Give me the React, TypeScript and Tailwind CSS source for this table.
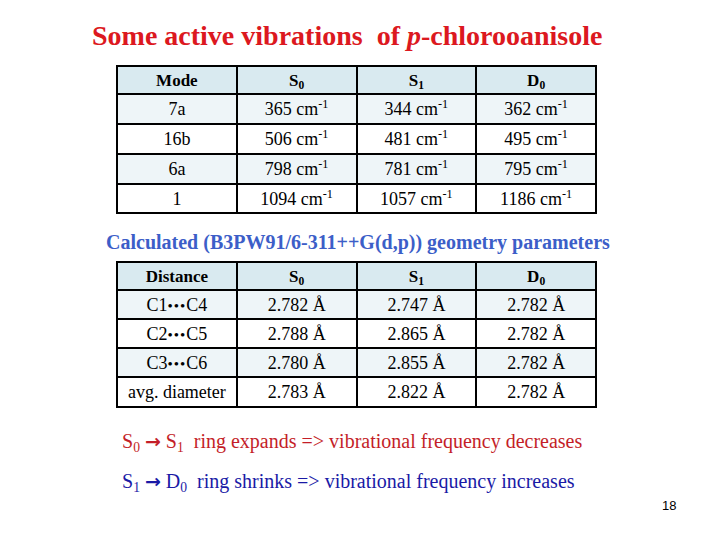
import React from "react";

const serif = { fontFamily: '"Liberation Serif", "Times New Roman", serif' };
const dejavu = { fontFamily: '"DejaVu Sans", sans-serif' };

function Sub({ c, n }: { c: string; n: string }) {
  return (
    <span>
      {c}
      <span className="text-[0.68em] relative top-[0.3em]">{n}</span>
    </span>
  );
}

function Cm({ v }: { v: string }) {
  return (
    <span>
      {v} cm<span className="text-[0.68em] relative -top-[0.55em]">-1</span>
    </span>
  );
}

const rowBg = ["bg-[#eef5f8]", "bg-white", "bg-[#eef5f8]", "bg-white"];

function Table({
  head,
  rows,
  rowH,
}: {
  head: React.ReactNode[];
  rows: React.ReactNode[][];
  rowH: string[];
}) {
  return (
    <table className="ml-[116px] w-[481px] border-collapse border-2 border-black table-fixed text-[18px] text-black">
      <tbody>
        <tr className="bg-[#d9eaf0] h-[28px]">
          {head.map((h, i) => (
            <td key={i} className="border-2 border-black text-center font-bold p-0 leading-none text-[17px]">
              {h}
            </td>
          ))}
        </tr>
        {rows.map((r, ri) => (
          <tr key={ri} className={`${rowBg[ri]} ${rowH[ri]}`}>
            {r.map((c, ci) => (
              <td key={ci} className="border-2 border-black text-center p-0 leading-none">
                {c}
              </td>
            ))}
          </tr>
        ))}
      </tbody>
    </table>
  );
}

export default function App() {
  const t1 = [
    ["7a", <Cm v="365" />, <Cm v="344" />, <Cm v="362" />],
    ["16b", <Cm v="506" />, <Cm v="481" />, <Cm v="495" />],
    ["6a", <Cm v="798" />, <Cm v="781" />, <Cm v="795" />],
    ["1", <Cm v="1094" />, <Cm v="1057" />, <Cm v="1186" />],
  ];
  const dots = <span className="text-[15px] tracking-[1px]">{"\u2022\u2022\u2022"}</span>;
  const t2: React.ReactNode[][] = [
    [<span>C1{dots}C4</span>, "2.782 Å", "2.747 Å", "2.782 Å"],
    [<span>C2{dots}C5</span>, "2.788 Å", "2.865 Å", "2.782 Å"],
    [<span>C3{dots}C6</span>, "2.780 Å", "2.855 Å", "2.782 Å"],
    ["avg. diameter", "2.783 Å", "2.822 Å", "2.782 Å"],
  ];
  const arrow = (
    <span className="font-bold text-[19px]" style={dejavu}>
      →
    </span>
  );
  return (
    <div className="w-[720px] h-[540px] bg-white relative overflow-hidden" style={serif}>
      <div className="pt-[18px] pl-[92px] h-[65px]">
        <div className="text-[#dc1820] font-bold text-[28px] leading-[36px] whitespace-pre">
          Some active vibrations  of <span className="italic">p</span>-chlorooanisole
        </div>
      </div>
      <Table
        head={["Mode", <Sub c="S" n="0" />, <Sub c="S" n="1" />, <Sub c="D" n="0" />]}
        rows={t1}
        rowH={["h-[30px]", "h-[30px]", "h-[30px]", "h-[29px]"]}
      />
      <div className="pl-[106px] pt-[16px] h-[47px]">
        <div className="text-[#3c5ec8] font-bold text-[20px] leading-[24px] whitespace-nowrap">
          Calculated (B3PW91/6-311++G(d,p)) geometry parameters
        </div>
      </div>
      <Table
        head={["Distance", <Sub c="S" n="0" />, <Sub c="S" n="1" />, <Sub c="D" n="0" />]}
        rows={t2}
        rowH={["h-[29px]", "h-[29px]", "h-[29px]", "h-[30px]"]}
      />
      <div className="pl-[122px] pt-[21px] text-[20px] leading-[24px]">
        <div className="text-[#c41e28] whitespace-pre">
          <Sub c="S" n="0" /> {arrow} <Sub c="S" n="1" />  ring expands =&gt; vibrational frequency decreases
        </div>
        <div className="text-[#1a1aa6] whitespace-pre mt-[13px]">
          <Sub c="S" n="1" /> {arrow} <Sub c="D" n="0" />  ring shrinks =&gt; vibrational frequency increases
        </div>
      </div>
      <div
        className="absolute left-[662px] top-[496px] text-[13px] text-black"
        style={{ fontFamily: '"Liberation Sans", Arial, sans-serif' }}
      >
        18
      </div>
    </div>
  );
}
